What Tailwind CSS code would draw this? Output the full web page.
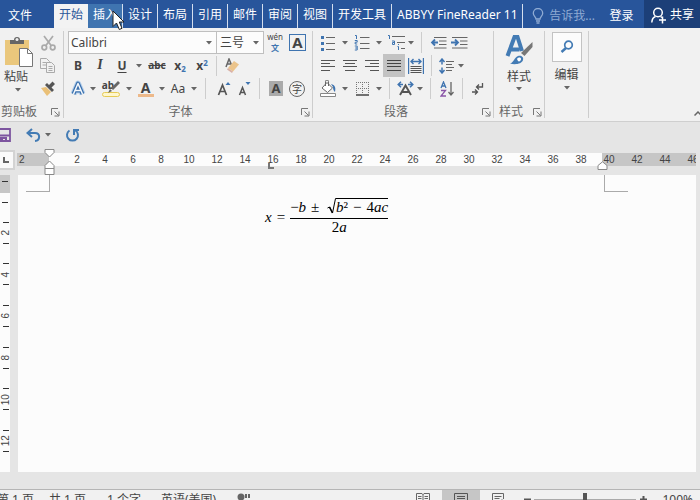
<!DOCTYPE html>
<html lang="zh-CN">
<head>
<meta charset="utf-8">
<meta name="viewport" content="width=device-width, initial-scale=1">
<title>文档编辑器</title>
<script src="https://cdn.jsdelivr.net/npm/@tailwindcss/browser@4"></script>
</head>
<body class="h-screen overflow-hidden bg-[#e5e5e5] font-['Noto_Sans','Noto_Sans_CJK_SC',sans-serif] text-xs text-[#444]">
<svg class="hidden" aria-hidden="true">
  <symbol id="arrow" viewBox="0 0 6 4"><path d="M0 0h6L3 3.6z" fill="#666"/></symbol>
  <symbol id="launch" viewBox="0 0 9 9"><path d="M.5 7V.5H7M3.5 3.5l4 4M8 3.5V8H3.5" fill="none" stroke="#777"/></symbol>
</svg>
<div class="flex h-[calc(100vh+9px)] flex-col">

  <header class="flex h-[28px] shrink-0 bg-[#28559b] text-white">
    <button class="w-[54px] shrink-0 pr-[14px] pt-[3px]">文件</button>
    <nav class="mt-[4px] flex shrink-0 leading-[22px]">
      <a href="#" class="w-[34px] bg-[#f3f3f3] text-center text-[#2b579a]">开始</a>
      <a href="#" class="w-[35px] border-r border-[#d5dfee] bg-[#3f74b0] text-center">插入</a>
      <a href="#" class="border-r border-[#d5dfee] px-[5px]">设计</a>
      <a href="#" class="border-r border-[#d5dfee] px-[5px]">布局</a>
      <a href="#" class="border-r border-[#d5dfee] px-[5px]">引用</a>
      <a href="#" class="border-r border-[#d5dfee] px-[5px]">邮件</a>
      <a href="#" class="border-r border-[#d5dfee] px-[5px]">审阅</a>
      <a href="#" class="border-r border-[#d5dfee] px-[5px]">视图</a>
      <a href="#" class="border-r border-[#d5dfee] px-[5px]">开发工具</a>
      <a href="#" class="w-[131px] overflow-hidden whitespace-nowrap border-r border-[#d5dfee] pl-[5px]">ABBYY FineReader 11</a>
    </nav>
    <div class="ml-auto flex shrink-0">
      <button class="flex items-center gap-[5px] pt-[3px] text-[#8fabd3]">
        <svg width="12" height="16" viewBox="0 0 12 16" fill="none" stroke="currentColor" stroke-width="1.3"><path d="M4 11C4 9 1.3 8 1.3 5.2a4.7 4.7 0 0 1 9.4 0C10.700 8 8 9 8 11zM4 13h4M4.500 15h3"/></svg>
        告诉我...</button>
      <button class="w-[49px] pl-[4px] pt-[3px]">登录</button>
      <button class="flex w-[56px] items-center gap-[4px] bg-[#1c3f78] pl-[7px] pt-[2px]">
        <svg width="15" height="17" viewBox="0 0 15 17" fill="none" stroke="#fff" stroke-width="1.5"><circle cx="7" cy="5.500" r="4.300"/><path d="M.8 15.500c.2-3.500 1.700-5.300 3.700-6M9.500 9.500l1.500 1M8 13h7M11.500 9.500v7"/></svg>
        共享</button>
    </div>
  </header>

  <section aria-label="功能区" class="flex h-[94px] shrink-0 border-b border-[#cfcfcf] bg-[#f1f1f1] pb-[3px] pt-[3px]">
    <!-- Clipboard -->
    <div class="flex w-[64px] shrink-0 flex-col border-r border-[#cdcdcd]">
      <div class="flex h-[69px]">
        <button class="flex w-[36px] flex-col items-center pt-[5px]">
          <svg class="ml-[2px]" width="30" height="32" viewBox="0 0 30 32"><path d="M1 4h24v25H1z" fill="#eac77c"/><path d="M6 8V4h4a3 3 0 0 1 6 0h4v4z" fill="#666"/><circle cx="13" cy="3.500" r="1.500" fill="#eee"/><path d="M15.500 12.500h8l5 5v13h-13z" fill="#fff" stroke="#777"/><path d="M23.500 12.500v5h5" fill="none" stroke="#777"/></svg>
          <span class="-ml-[4px] leading-[18px]">粘贴</span>
          <svg class="mt-[2px]" width="6" height="4"><use href="#arrow"/></svg>
        </button>
        <div class="flex w-[24px] flex-col">
          <button aria-label="剪切" class="flex h-[23px] items-center justify-center"><svg width="15" height="16" viewBox="0 0 15 16" fill="none" stroke="#aaa" stroke-width="1.700"><path d="M3 1l7.500 10M12 1L4.500 11"/><circle cx="3.300" cy="12.500" r="2.300"/><circle cx="11.700" cy="12.500" r="2.300"/></svg></button>
          <button aria-label="复制" class="flex h-[23px] items-center justify-center"><svg width="16" height="15" viewBox="0 0 16 15" fill="#f1f1f1" stroke="#aaa"><path d="M.5.5h6l3 3v7h-9zM2.500 4.500h4M2.500 7h4"/><path d="M6.500 4.500h5l3 3v7h-8zM8.500 8.500h4M8.500 10.500h4M8.500 12.500h4"/></svg></button>
          <button aria-label="格式刷" class="flex h-[23px] items-center justify-center"><svg width="16" height="15" viewBox="0 0 16 15"><path d="M1 7l5-1 5 5-4 4z" fill="#eac077"/><path d="M5 4l7 7 2-2-2.500-2.500L15 3 12.500.5 9 4 7 2z" fill="#555"/></svg></button>
        </div>
      </div>
      <div class="flex h-[18px] items-center justify-between pl-px pr-[3px] pt-[6px] text-[#666]"><span>剪贴板</span><button aria-label="剪贴板设置"><svg class="block" width="9" height="9"><use href="#launch"/></svg></button></div>
    </div>

    <!-- Font -->
    <div class="flex w-[249px] shrink-0 flex-col border-r border-[#cdcdcd] pl-[3px]">
      <div class="flex h-[23px] items-center pl-[1px]">
        <div class="relative w-[149px]">
          <select aria-label="字体" class="block h-[23px] w-full appearance-none border border-[#bfbfbf] bg-[#fcfcfc] pl-[2px] text-[12px] text-[#444]"><option>Calibri</option></select>
          <svg class="pointer-events-none absolute right-[5px] top-[10px]" width="6" height="4"><use href="#arrow"/></svg>
        </div>
        <div class="relative -ml-px w-[48px]">
          <select aria-label="字号" class="block h-[23px] w-full appearance-none border border-[#bfbfbf] bg-[#fcfcfc] pl-[3px] text-[12px] text-[#444]"><option>三号</option></select>
          <svg class="pointer-events-none absolute right-[5px] top-[10px]" width="6" height="4"><use href="#arrow"/></svg>
        </div>
        <button aria-label="拼音指南" class="flex w-[22px] flex-col items-center text-[8px] leading-[11px]"><span>wén</span><span class="font-bold leading-[12px] text-[#3f74b0]">文</span></button>
        <button aria-label="字符边框" class="ml-[3px] h-[17px] w-[17px] border border-[#3f74b0] text-center text-[15px] font-bold leading-[15px]">A</button>
      </div>
      <div class="flex h-[23px] items-center text-[12px]">
        <button aria-label="加粗" class="w-[22px] font-bold">B</button>
        <button aria-label="倾斜" class="w-[22px] font-['Liberation_Serif',serif] text-[14px] italic font-bold">I</button>
        <button aria-label="下划线" class="w-[22px] font-bold underline underline-offset-2">U</button>
        <button aria-label="下划线样式" class="flex w-[12px] justify-center"><svg width="6" height="4"><use href="#arrow"/></svg></button>
        <button aria-label="删除线" class="w-[24px] text-[10px] font-bold line-through">abc</button>
        <button aria-label="下标" class="w-[22px] font-bold">x<sub class="text-[8px] text-[#3f74b0]">2</sub></button>
        <button aria-label="上标" class="w-[22px] font-bold">x<sup class="text-[8px] text-[#3f74b0]">2</sup></button>
        <span class="mx-[3px] h-[20px] w-px bg-[#cdcdcd]"></span>
        <button aria-label="清除格式" class="flex w-[26px] justify-center"><svg width="16" height="16" viewBox="0 0 16 16"><path d="M1 9l3-8 3 7M2.500 6h3.500" fill="none" stroke="#666" stroke-width="1.500"/><path d="M9 3l5 3.500-6 7-5-3.500z" fill="#ebc48b"/><path d="M3 10l5 3.500L7 15l-5-3.500z" fill="#d9b0a5"/></svg></button>
      </div>
      <div class="flex h-[23px] items-center">
        <button aria-label="文本效果" class="flex w-[22px] justify-center"><svg width="16" height="17" viewBox="0 0 16 17" fill="none" stroke-linejoin="round"><path d="M3.500 14L8 3.500 12.500 14M5 10.500h6" stroke="#b5cfea" stroke-width="6"/><path d="M3.500 14L8 3.500 12.500 14M5 10.500h6" stroke="#3a70ad" stroke-width="4"/><path d="M3.500 14L8 3.500 12.500 14M5 10.500h6" stroke="#f5f8fc" stroke-width="1.500"/></svg></button>
        <button aria-label="文本效果选项" class="flex w-[8px] justify-center"><svg width="6" height="4"><use href="#arrow"/></svg></button>
        <button aria-label="突出显示" class="relative flex h-[20px] w-[28px] justify-center text-[10px] font-bold leading-[12px]"><span class="mr-[6px]">ab</span><svg class="absolute left-[5px] top-[2px]" width="19" height="17" viewBox="0 0 19 17"><rect x=".5" y="11.500" width="17" height="4" rx="2" fill="#fff7cc" stroke="#e6cb55"/><path d="M6 12l2-4 2 2zM9 7L16 0l2 2-7 7z" fill="#666"/></svg></button>
        <button aria-label="突出显示颜色" class="flex w-[8px] justify-center"><svg width="6" height="4"><use href="#arrow"/></svg></button>
        <button aria-label="字体颜色" class="flex w-[25px] flex-col items-center text-[14px] font-bold leading-[13px]">A<span class="h-[3px] w-[16px] bg-[#edb98a]"></span></button>
        <button aria-label="选择字体颜色" class="flex w-[8px] justify-center"><svg width="6" height="4"><use href="#arrow"/></svg></button>
        <button aria-label="更改大小写" class="w-[24px] text-[12px]">Aa</button>
        <button aria-label="大小写选项" class="flex w-[8px] justify-center"><svg width="6" height="4"><use href="#arrow"/></svg></button>
        <span class="ml-[7px] mr-[8px] h-[21px] w-px bg-[#cdcdcd]"></span>
        <button aria-label="增大字号" class="flex w-[20px] justify-center"><svg width="14" height="16" viewBox="0 0 14 16"><path d="M1.500 14L5.500 4l4 10M3 10.500h5" fill="none" stroke="#555" stroke-width="1.700"/><path d="M8.500 4l2.500-3 2.500 3z" fill="#3f74b0"/></svg></button>
        <button aria-label="减小字号" class="flex w-[20px] justify-center"><svg width="14" height="16" viewBox="0 0 14 16"><path d="M2.500 14L5.500 6.500l3 7.500M3.500 11.500h4" fill="none" stroke="#555" stroke-width="1.500"/><path d="M8.500 1h5L11 4z" fill="#3f74b0"/></svg></button>
        <span class="mx-[5px] h-[21px] w-px bg-[#cdcdcd]"></span>
        <button aria-label="字符底纹" class="mx-[4px] h-[15px] w-[14px] bg-[#aaa] text-center text-[13px] font-bold leading-[15px]">A</button>
        <button aria-label="带圈字符" class="ml-[2px] flex h-[16px] w-[16px] items-center justify-center rounded-full border border-[#666] text-[10px] leading-none">字</button>
      </div>
      <div class="relative flex h-[18px] items-center justify-center pr-[18px] pt-[6px] text-[#666]"><span>字体</span><button aria-label="字体设置" class="absolute right-[2px] top-[8px]"><svg class="block" width="9" height="9"><use href="#launch"/></svg></button></div>
    </div>

    <!-- Paragraph -->
    <div class="flex w-[181px] shrink-0 flex-col border-r border-[#cdcdcd] pl-[4px]">
      <div class="flex h-[23px] items-center">
        <button aria-label="项目符号" class="flex w-[22px] justify-center"><svg width="16" height="16" viewBox="0 0 16 16"><path d="M1 1h3v3H1zM1 7h3v3H1zM1 13h3v3H1z" fill="#3f74b0"/><path d="M6 2.500h9M6 8.500h9M6 14.500h9" stroke="#666"/></svg></button>
        <button aria-label="项目符号库" class="flex w-[12px] justify-center"><svg width="6" height="4"><use href="#arrow"/></svg></button>
        <button aria-label="编号" class="flex w-[22px] justify-center"><svg width="16" height="17" viewBox="0 0 16 17"><path d="M1 1.500h1.500V5M.8 6.500h2.400v1.700H1.200V10h2M.8 12h2.400v4H.8M1.200 14h2" fill="none" stroke="#3f74b0"/><path d="M6 3.500h9.500M6 9.500h9.500M6 14.500h9.500" stroke="#666"/></svg></button>
        <button aria-label="编号库" class="flex w-[12px] justify-center"><svg width="6" height="4"><use href="#arrow"/></svg></button>
        <button aria-label="多级列表" class="flex w-[22px] justify-center"><svg width="18" height="17" viewBox="0 0 18 17"><path d="M1 1.500h1.500V5M5 7h2.500v3.500H5.500V8.500h2M11.500 10v1M10.500 12.500h1v3.500" fill="none" stroke="#3f74b0"/><path d="M5 2.500h13M10 8.500h8M14 14.500h4" stroke="#666"/></svg></button>
        <button aria-label="列表库" class="flex w-[8px] justify-center"><svg width="6" height="4"><use href="#arrow"/></svg></button>
        <span class="mx-[6px] h-[21px] w-px bg-[#cdcdcd]"></span>
        <button aria-label="减少缩进" class="flex w-[20px] justify-center"><svg width="17" height="14" viewBox="0 0 17 14"><path d="M4 1.500h12.500M9 5h7.500M9 8.500h7.500M4 12h12.500" stroke="#666" fill="none"/><path d="M8 6.500H2M5 3.500l-3 3 3 3" fill="none" stroke="#3f74b0" stroke-width="1.800"/></svg></button>
        <button aria-label="增加缩进" class="flex w-[22px] justify-center"><svg width="17" height="14" viewBox="0 0 17 14"><path d="M1 1.500h15.500M9 5h7.500M9 8.500h7.500M1 12h15.500" stroke="#666" fill="none"/><path d="M0 6.500h6M4 3.500l3 3-3 3" fill="none" stroke="#3f74b0" stroke-width="1.800"/></svg></button>
      </div>
      <div class="flex h-[23px] items-center">
        <button aria-label="左对齐" class="flex w-[22px] justify-center"><svg width="14" height="11" viewBox="0 0 14 11"><path d="M0 .5h14M0 3.500h9M0 6.500h14M0 10.500h9" stroke="#555"/></svg></button>
        <button aria-label="居中" class="flex w-[22px] justify-center"><svg width="14" height="11" viewBox="0 0 14 11"><path d="M0 .5h14M2 3.500h10M0 6.500h14M2 10.500h10" stroke="#555"/></svg></button>
        <button aria-label="右对齐" class="flex w-[22px] justify-center"><svg width="14" height="11" viewBox="0 0 14 11"><path d="M0 .5h14M5 3.500h9M0 6.500h14M5 10.500h9" stroke="#555"/></svg></button>
        <button aria-label="两端对齐" aria-pressed="true" class="flex h-[23px] w-[22px] items-center justify-center bg-[#c3c3c3]"><svg width="14" height="11" viewBox="0 0 14 11"><path d="M0 .5h14M0 3.500h14M0 6.500h14M0 10.500h14" stroke="#444"/></svg></button>
        <button aria-label="分散对齐" class="flex w-[22px] justify-center"><svg width="16" height="16" viewBox="0 0 16 16"><path d="M.5 0v16M15.500 0v16M2.500 3.500h11M5.500 1L3 3.500 5.500 6M10.500 1L13 3.500 10.500 6" fill="none" stroke="#3f74b0" stroke-width="1.400"/><path d="M2.500 8.500h11M2.500 10.500h11M2.500 12.500h11M2.500 14.500h11" stroke="#555"/></svg></button>
        <span class="ml-[4px] mr-[3px] h-[21px] w-px bg-[#cdcdcd]"></span>
        <button aria-label="行距" class="flex w-[22px] justify-center"><svg width="15" height="16" viewBox="0 0 15 16"><path d="M3 1v5.500M3 9.500V15M.5 4L3 1l2.500 3M.5 12L3 15l2.500-3" fill="none" stroke="#3f74b0" stroke-width="1.500"/><path d="M7 3.500h8M7 6.500h6M7 9.500h8M7 12.500h6" stroke="#666"/></svg></button>
        <button aria-label="行距选项" class="flex w-[8px] justify-center"><svg width="6" height="4"><use href="#arrow"/></svg></button>
      </div>
      <div class="flex h-[23px] items-center">
        <button aria-label="底纹" class="flex w-[22px] justify-center"><svg width="18" height="17" viewBox="0 0 18 17"><path d="M3 8l5-5.500L13.500 8 8.500 12.500z" fill="#fff" stroke="#666"/><path d="M6.500 6V1.500a1.500 1.500 0 0 1 3 0V6" fill="none" stroke="#666"/><path d="M12 4c4 1 5 3.500 4 8-1-1-2-2-2-5z" fill="#3f74b0"/><path d="M1.500 13.500h15v3h-15z" fill="#fff" stroke="#888"/></svg></button>
        <button aria-label="底纹颜色" class="flex w-[12px] justify-center"><svg width="6" height="4"><use href="#arrow"/></svg></button>
        <button aria-label="边框" class="flex w-[22px] justify-center"><svg width="13" height="14" viewBox="0 0 13 14"><path d="M0 .5h13M0 6.500h13M.5 0v12M6.500 0v12M12.500 0v12" stroke="#777" stroke-dasharray="1 1"/><path d="M0 13h13" stroke="#444" stroke-width="1.500"/></svg></button>
        <button aria-label="边框样式" class="flex w-[12px] justify-center"><svg width="6" height="4"><use href="#arrow"/></svg></button>
        <span class="mx-[4px] h-[21px] w-px bg-[#cdcdcd]"></span>
        <button aria-label="中文版式" class="flex w-[22px] justify-center"><svg width="17" height="15" viewBox="0 0 17 15"><path d="M3 14L8.500 4.500 14 14M5 11h7" fill="none" stroke="#555" stroke-width="1.900"/><path d="M6 3.500H1.500M4 .8L1.200 3.500 4 6.200M11 3.500h4.500M13 .8l2.800 2.700L13 6.200" fill="none" stroke="#3f74b0" stroke-width="1.500"/></svg></button>
        <button aria-label="版式选项" class="flex w-[8px] justify-center"><svg width="6" height="4"><use href="#arrow"/></svg></button>
        <span class="mx-[6px] h-[21px] w-px bg-[#cdcdcd]"></span>
        <button aria-label="排序" class="flex w-[20px] justify-center"><svg width="14" height="16" viewBox="0 0 14 16" fill="none"><path d="M1 7L3.500 1 6 7M2 5h3" stroke="#3f74b0" stroke-width="1.300"/><path d="M1 9.500h4.500L1 15h5" stroke="#8a55a8" stroke-width="1.300"/><path d="M11 1v13M8.500 11l2.500 3 2.500-3" stroke="#666" stroke-width="1.300"/></svg></button>
        <span class="mx-[5px] h-[21px] w-px bg-[#cdcdcd]"></span>
        <button aria-label="显示编辑标记" class="flex w-[20px] justify-center"><svg width="12" height="12" viewBox="0 0 12 12" fill="none" stroke="#555" stroke-width="1.300"><path d="M10.500 0v4H5M7 1.500L4.500 4 7 6.500M0 9h5M3 6.500L5.500 9 3 11.500"/></svg></button>
      </div>
      <div class="relative flex h-[18px] items-center justify-center pr-[18px] pt-[6px] text-[#666]"><span>段落</span><button aria-label="段落设置" class="absolute right-[2px] top-[8px]"><svg class="block" width="9" height="9"><use href="#launch"/></svg></button></div>
    </div>

    <!-- Styles -->
    <div class="flex w-[51px] shrink-0 flex-col border-r border-[#cdcdcd]">
      <button class="flex h-[69px] flex-col items-center pt-[4px]">
        <svg width="28" height="30" viewBox="0 0 28 30"><path d="M2.500 21L9.500 2h3l4.500 14M5.500 14.500h9" fill="none" stroke="#437bb4" stroke-width="4"/><path d="M27.500 7v5l-8 9-3.500-3z" fill="#777"/><path d="M5 28.500c4-1 4-6 8-7.500 3-1 6 1 5 4-1 4-8 5-13 3.500z" fill="#437bb4"/><path d="M12 24c1-2 4-2 4 0s-2 3-3 2z" fill="#fff"/></svg>
        <span class="mt-[3px] leading-[18px]">样式</span>
        <svg class="mt-[1px]" width="6" height="4"><use href="#arrow"/></svg>
      </button>
      <div class="flex h-[18px] items-center justify-between pl-[5px] pr-[2px] pt-[6px] text-[#666]"><span>样式</span><button aria-label="样式设置"><svg class="block" width="9" height="9"><use href="#launch"/></svg></button></div>
    </div>

    <!-- Editing -->
    <div class="w-[44px] shrink-0 border-r border-[#cdcdcd]">
      <button class="flex w-full flex-col items-center pt-[1px]">
        <span class="flex h-[30px] w-[30px] items-center justify-center border border-[#c3c3c3] bg-[#fcfcfc]"><svg width="14" height="14" viewBox="0 0 14 14" fill="none" stroke="#437bb4"><circle cx="8.500" cy="5" r="3.800" stroke-width="1.700"/><path d="M6 8l-4.500 4" stroke-width="2.500"/></svg></span>
        <span class="mt-[3px] leading-[20px]">编辑</span>
        <svg class="mt-[1px]" width="6" height="4"><use href="#arrow"/></svg>
      </button>
    </div>
    <button aria-label="折叠功能区" class="-mr-[2px] ml-auto mb-[2px] self-end"><svg width="8" height="5" viewBox="0 0 8 5"><path d="M.5 4.500L4 1l3.500 3.500" fill="none" stroke="#666" stroke-width="1.500"/></svg></button>
  </section>

  <!-- Quick access -->
  <div class="flex h-[26px] shrink-0 items-center">
    <button aria-label="保存" class="w-[26px]"><svg width="11" height="14" viewBox="0 0 11 14"><path d="M0 1h10v12H0M0 7.500h10" fill="none" stroke="#7d559f" stroke-width="1.800"/><path d="M0 9h7v4H5v-2H3v2H0z" fill="#7d559f"/></svg></button>
    <button aria-label="撤销" class="w-[19px]"><svg width="15" height="14" viewBox="0 0 15 14" fill="none" stroke="#437bb4" stroke-width="2"><path d="M6 1L1.500 5 6 9M2 5h7c5.500 0 5.500 7.500 0 8"/></svg></button>
    <button aria-label="撤销列表" class="w-[20px]"><svg width="6" height="4"><use href="#arrow"/></svg></button>
    <button aria-label="重复"><svg width="15" height="15" viewBox="0 0 15 15" fill="none" stroke="#437bb4" stroke-width="2"><path d="M4.500 2.500a5.500 5.500 0 1 0 6 0M9 7V2h5"/></svg></button>
  </div>

  <!-- Horizontal ruler -->
  <div class="flex h-[27px] shrink-0 items-start pr-[4px] pt-[5px]">
    <button aria-label="左对齐制表符" class="-mt-[3px] flex h-[20px] w-[15px] items-center justify-center border-y-2 border-r-2 border-[#d3d3d3] bg-[#fafafa]"><svg class="-ml-[2px]" width="6" height="6" viewBox="0 0 6 6"><path d="M1 0v5h5" fill="none" stroke="#666" stroke-width="2"/></svg></button>
    <div class="relative ml-[2px] flex h-[13px] min-w-0 flex-1 font-['Liberation_Sans',sans-serif] text-[10px] leading-[14px] text-[#444]">
      <div class="w-[32px] shrink-0 bg-[#c6c6c6] pl-[2px]">2</div>
      <div id="ruler-page" class="flex w-[553px] shrink-0 bg-[#fcfcfc] pl-[14px]"></div>
      <div id="ruler-margin" class="flex min-w-0 flex-1 overflow-hidden bg-[#c6c6c6]"></div>
      <svg class="absolute -top-[4px] left-[27px]" width="11" height="26" viewBox="0 0 11 26" fill="#fff" stroke="#888"><path d="M1 .5h9v3L5.500 8 1 3.500zM1 25.500v-9l4.500-4.500 4.500 4.500v9zM1 19.500h9"/></svg>
      <svg class="absolute left-[580px] top-[8px]" width="11" height="9" viewBox="0 0 11 9" fill="#fff" stroke="#888"><path d="M1 8.500v-4L5.500.8 10 4.500v4z"/></svg>
      <svg class="absolute left-[251px] top-[10px]" width="6" height="6" viewBox="0 0 6 6"><path d="M1 0v5h5" fill="none" stroke="#777" stroke-width="2"/></svg>
    </div>
  </div>

  <!-- Document -->
  <main class="flex min-h-0 flex-1 pb-[17px] pr-[4px]">
    <div class="w-[10px] shrink-0 bg-[#fcfcfc] font-['Liberation_Sans',sans-serif] text-[10px] text-[#444]">
      <div class="flex h-[18px] items-center justify-center bg-[#c6c6c6] pb-[5px]"><span class="h-px w-[6px] bg-[#333]"></span></div>
      <div class="flex h-[19px] items-center justify-center"><span class="h-px w-[6px] bg-[#333]"></span></div>
      <div id="ruler-side" class="grid h-[250px] grid-rows-6"></div>
    </div>
    <article class="relative ml-[8px] flex-1 bg-[#fcfcfc] pl-[247px] pt-[23px] text-black">
      <span class="absolute left-[8px] top-0 h-[17px] w-[24px] border-b border-r border-[#aaa]"></span>
      <span class="absolute left-[586px] top-0 h-[17px] w-[24px] border-b border-l border-[#aaa]"></span>
      <div role="math" aria-label="x = (−b ± √(b² − 4ac)) / 2a" class="flex items-center gap-[5px] font-['Liberation_Serif',serif] text-[15px] leading-[16px]">
        <i>x</i><span>=</span>
        <span class="flex w-[98px] flex-col items-center">
          <span class="flex h-[21px] w-full items-start border-b border-black">
            <span class="pt-px">−<i>b</i></span><span class="px-[5px] pt-px">±</span>
            <span class="ml-auto flex"><svg width="9" height="16" viewBox="0 0 9 16" fill="none" stroke="#000"><path d="M.5 10L2.500 9l3 6L8.500.5H9"/><path d="M2.500 9l3 6" stroke-width="1.500"/></svg><span class="flex h-[16px] gap-[5px] border-t border-black"><span><i>b</i>²</span><span>−</span><span>4<i>ac</i></span></span></span>
          </span>
          <span>2<i>a</i></span>
        </span>
      </div>
    </article>
  </main>

  <!-- Status bar -->
  <footer class="flex h-[20px] shrink-0 items-center whitespace-nowrap border-t border-[#b5b5b5] bg-[#f1f1f1] pr-[7px]">
    <span class="-ml-[3px] w-[52px]">第 1 页</span>
    <span class="w-[58px]">共 1 页</span>
    <span class="w-[54px]">1 个字</span>
    <button class="w-[76px] text-left">英语(美国)</button>
    <button aria-label="校对"><svg width="14" height="14" viewBox="0 0 14 14" fill="#666"><circle cx="4" cy="4" r="3.500"/><path d="M8 1h2v4H8zM11 1h2v4h-2zM7 7h6v2H7zM3 9h4v3H3z"/></svg></button>
    <div class="ml-auto flex items-center">
      <button aria-label="阅读视图" class="flex h-[19px] w-[38px] items-center justify-center"><svg width="14" height="13" viewBox="0 0 14 13" fill="none" stroke="#666"><path d="M.5.5H6l1 1 1-1h5.500v11H8l-1 1-1-1H.5zM7 1v11M2 3.500h3.500M2 5.500h3.500M2 7.500h3.500M8.500 3.500H12M8.500 5.500H12M8.500 7.500H12"/></svg></button>
      <button aria-label="页面视图" class="flex h-[19px] w-[38px] items-center justify-center bg-[#c6c6c6]"><svg width="14" height="14" viewBox="0 0 14 14" fill="none" stroke="#555"><path d="M.5.5h13v13H.5zM3 3.500h8M3 5.500h8M3 7.500h8M3 9.500h8"/></svg></button>
      <button aria-label="Web 视图" class="flex h-[19px] w-[38px] items-center justify-center"><svg width="14" height="14" viewBox="0 0 14 14" fill="none" stroke="#666"><path d="M6 12.500H.5V.5h11V6M2.500 3.500h7M2.500 5.500h5M2.500 7.500h3"/><circle cx="10" cy="10" r="3" fill="#777"/></svg></button>
      <button aria-label="缩小" class="ml-[4px] flex w-[10px] justify-center"><svg width="7" height="7"><path d="M0 3.500h7" stroke="#555" stroke-width="2"/></svg></button>
      <input type="range" aria-label="显示比例" min="10" max="190" value="100" class="mx-[2px] h-[14px] w-[102px] appearance-none bg-transparent [&::-webkit-slider-runnable-track]:h-[2px] [&::-webkit-slider-runnable-track]:bg-[#aaa] [&::-webkit-slider-thumb]:-mt-[6px] [&::-webkit-slider-thumb]:h-[14px] [&::-webkit-slider-thumb]:w-[4px] [&::-webkit-slider-thumb]:appearance-none [&::-webkit-slider-thumb]:bg-[#555]">
      <button aria-label="放大" class="flex w-[10px] justify-center"><svg width="7" height="7"><path d="M0 3.500h7M3.500 0v7" stroke="#555" stroke-width="2"/></svg></button>
      <button class="ml-[11px] w-[34px] text-right">100%</button>
    </div>
  </footer>
</div>

<svg class="pointer-events-none absolute left-[112px] top-[10px]" width="13" height="21" viewBox="0 0 13 21" aria-hidden="true"><path d="M1 1v15.500l3.500-3.500 2.800 6.500 2.700-1.200L7.300 12H12z" fill="#fff" stroke="#222"/></svg>

<script>
  const cell = (n) => `<span class="w-[28px] shrink-0 text-center">${n}</span>`;
  const evens = (from, to) => Array.from({ length: (to - from) / 2 + 1 }, (_, i) => from + i * 2);
  document.getElementById('ruler-page').innerHTML = evens(2, 38).map(cell).join('');
  document.getElementById('ruler-margin').innerHTML = '<span class="-ml-[7px]"></span>' + evens(40, 46).map(cell).join('');
  document.getElementById('ruler-side').innerHTML = evens(2, 12).map((n) =>
    `<div class="flex flex-col items-center justify-center"><span class="h-px w-[6px] bg-[#333]"></span><span class="flex h-[20px] items-center justify-center"><span class="-rotate-90">${n}</span></span><span class="h-px w-[6px] bg-[#333]"></span></div>`).join('');
</script>
</body>
</html>
